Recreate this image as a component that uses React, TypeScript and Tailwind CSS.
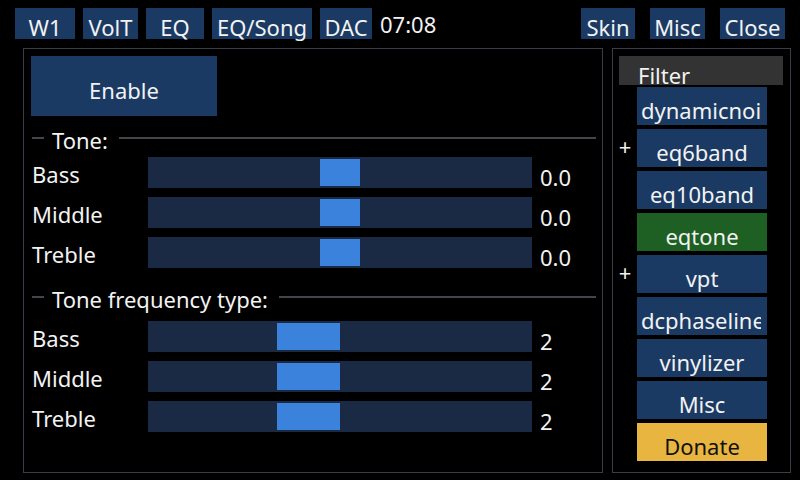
const font = { fontFamily: '"Noto Sans", "DejaVu Sans", sans-serif' };

function TopButton({ label, w }: { label: string; w: string }) {
  return (
    <div className={`${w} h-[31px] pt-[3.5px] bg-[#1b3a63] text-center leading-[30px] whitespace-nowrap`}>
      {label}
    </div>
  );
}

function SectionHeader({ title, className }: { title: string; className?: string }) {
  return (
    <div className={`flex items-start h-[30px] ${className ?? ''}`}>
      <div className="ml-[8px] mt-[11px] w-[12px] h-[2px] bg-[#44444c]" />
      <div className="ml-[8px] -mt-[1.5px] leading-[30px] whitespace-nowrap">{title}</div>
      <div className="ml-[11px] mr-[6px] mt-[11px] flex-1 h-[2px] bg-[#44444c]" />
    </div>
  );
}

type SliderRow = { label: string; value: string; left: number; width: number };

function Slider({ row }: { row: SliderRow }) {
  return (
    <div className="flex items-start h-[31px]">
      <div className="ml-[8px] w-[116px] pt-[1.5px] leading-[30px]">{row.label}</div>
      <div className="relative w-[384px] h-[31px] bg-[#1a2a44]">
        <div
          className="absolute top-[2px] bottom-[2px] bg-[#3b82dc]"
          style={{ left: row.left, width: row.width }}
        />
      </div>
      <div className="ml-[8px] pt-[5px] leading-[30px]">{row.value}</div>
    </div>
  );
}

const toneRows: SliderRow[] = [
  { label: 'Bass', value: '0.0', left: 172, width: 40 },
  { label: 'Middle', value: '0.0', left: 172, width: 40 },
  { label: 'Treble', value: '0.0', left: 172, width: 40 },
];

const freqRows: SliderRow[] = [
  { label: 'Bass', value: '2', left: 129, width: 63 },
  { label: 'Middle', value: '2', left: 129, width: 63 },
  { label: 'Treble', value: '2', left: 129, width: 63 },
];

type Filter = { name: string; bg: string; plus?: boolean; clip?: boolean; dark?: boolean };

const filters: Filter[] = [
  { name: 'dynamicnoise', bg: 'bg-[#1b3a63]', clip: true },
  { name: 'eq6band', bg: 'bg-[#1b3a63]', plus: true },
  { name: 'eq10band', bg: 'bg-[#1b3a63]' },
  { name: 'eqtone', bg: 'bg-[#1e6024]' },
  { name: 'vpt', bg: 'bg-[#1b3a63]', plus: true },
  { name: 'dcphaseline', bg: 'bg-[#1b3a63]', clip: true },
  { name: 'vinylizer', bg: 'bg-[#1b3a63]' },
  { name: 'Misc', bg: 'bg-[#1b3a63]' },
  { name: 'Donate', bg: 'bg-[#e8b541]', dark: true },
];

export default function App() {
  return (
    <div className="w-[800px] h-[480px] bg-black text-[#f2f2f2] text-[22px] overflow-hidden" style={font}>
      {/* top bar */}
      <div className="flex items-start pt-[8px] pl-[15px] pr-[15px] gap-[8px]">
        <TopButton label="W1" w="w-[60px]" />
        <TopButton label="VolT" w="w-[55px]" />
        <TopButton label="EQ" w="w-[58px]" />
        <TopButton label="EQ/Song" w="w-[100px]" />
        <TopButton label="DAC" w="w-[52px]" />
        <div className="mt-[1px] leading-[30px]">07:08</div>
        <div className="ml-auto flex gap-[15px]">
          <TopButton label="Skin" w="w-[54px]" />
          <TopButton label="Misc" w="w-[55px]" />
          <TopButton label="Close" w="w-[65px]" />
        </div>
      </div>

      <div className="flex items-start mt-[9px] pl-[23px] gap-[9px]">
        {/* main panel */}
        <div className="w-[580px] h-[425px] border border-[#3c3c48] flex flex-col">
          <div className="ml-[7px] mt-[7px] w-[186px] h-[60px] pt-[18.5px] bg-[#1b3a63] text-center leading-[30px]">
            Enable
          </div>
          <SectionHeader title="Tone:" className="mt-[10px]" />
          <div className="mt-[1px] flex flex-col gap-[9px]">
            {toneRows.map((r) => (
              <Slider key={r.label} row={r} />
            ))}
          </div>
          <SectionHeader title="Tone frequency type:" className="mt-[17px]" />
          <div className="mt-[6px] flex flex-col gap-[9px]">
            {freqRows.map((r) => (
              <Slider key={r.label} row={r} />
            ))}
          </div>
        </div>

        {/* filter panel */}
        <div className="w-[179px] h-[425px] border border-[#3c3c48] flex flex-col">
          <div className="ml-[6px] mt-[7px] w-[164px] h-[29px] pt-[3.5px] pl-[19px] bg-[#333333] leading-[30px] overflow-hidden">
            Filter
          </div>
          <div className="mt-[2px] flex flex-col gap-[4px]">
            {filters.map((f) => (
              <div key={f.name} className="flex items-center">
                <div className="w-[24px] -mt-[4px] text-center leading-[30px]">{f.plus ? '+' : ''}</div>
                <div
                  className={`w-[130px] h-[38px] pt-[7.5px] leading-[30px] whitespace-nowrap overflow-hidden ${f.bg} ${
                    f.clip ? 'pl-[4px]' : 'text-center'
                  } ${f.dark ? 'text-[#111111]' : ''}`}
                >
                  {f.clip ? <div className="w-[120px] overflow-hidden">{f.name}</div> : f.name}
                </div>
              </div>
            ))}
          </div>
        </div>
      </div>
    </div>
  );
}
